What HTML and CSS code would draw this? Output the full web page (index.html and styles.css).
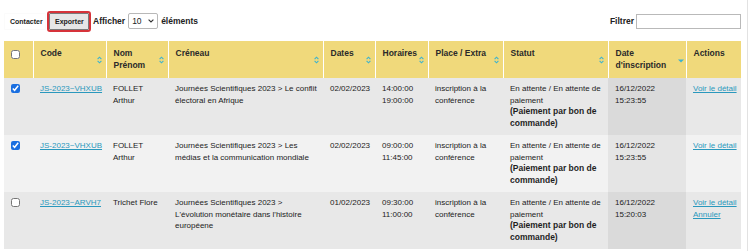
FILE: index.html
```html
<!DOCTYPE html>
<html lang="fr">
<head>
<meta charset="utf-8">
<title>Inscriptions</title>
<link rel="stylesheet" href="styles.css">
</head>
<body>
<div class="page">
  <div class="toolbar">
    <div class="toolbar-left">
      <button class="btn btn-plain" type="button">Contacter</button>
      <button class="btn btn-export" type="button">Exporter</button>
      <label class="length">Afficher
        <span class="select-wrap">
          <select class="length-select"><option>10</option><option>25</option><option>50</option></select>
          <svg class="chevron" width="6" height="4" viewBox="0 0 6 4"><path d="M0.6 0.6 L3 3 L5.4 0.6" fill="none" stroke="#333" stroke-width="1.1"/></svg>
        </span>
        éléments</label>
    </div>
    <label class="filter">Filtrer <input class="filter-input" type="search"></label>
  </div>

  <table class="grid">
    <colgroup>
      <col class="c-check"><col class="c-code"><col class="c-nom"><col class="c-creneau"><col class="c-dates">
      <col class="c-horaires"><col class="c-place"><col class="c-statut"><col class="c-dateins"><col class="c-actions">
    </colgroup>
    <thead>
      <tr>
        <th class="th-check"><input class="chk" type="checkbox"></th>
        <th>Code<svg class="sort" width="5" height="8" viewBox="0 0 5 8"><path d="M0.6 3.2 L2.5 1.2 L4.4 3.2 M0.6 4.8 L2.5 6.8 L4.4 4.8" fill="none" stroke="#3cb3cf" stroke-width="1.1"/></svg></th>
        <th>Nom Prénom<svg class="sort" width="5" height="8" viewBox="0 0 5 8"><path d="M0.6 3.2 L2.5 1.2 L4.4 3.2 M0.6 4.8 L2.5 6.8 L4.4 4.8" fill="none" stroke="#3cb3cf" stroke-width="1.1"/></svg></th>
        <th>Créneau<svg class="sort" width="5" height="8" viewBox="0 0 5 8"><path d="M0.6 3.2 L2.5 1.2 L4.4 3.2 M0.6 4.8 L2.5 6.8 L4.4 4.8" fill="none" stroke="#3cb3cf" stroke-width="1.1"/></svg></th>
        <th>Dates<svg class="sort" width="5" height="8" viewBox="0 0 5 8"><path d="M0.6 3.2 L2.5 1.2 L4.4 3.2 M0.6 4.8 L2.5 6.8 L4.4 4.8" fill="none" stroke="#3cb3cf" stroke-width="1.1"/></svg></th>
        <th>Horaires<svg class="sort" width="5" height="8" viewBox="0 0 5 8"><path d="M0.6 3.2 L2.5 1.2 L4.4 3.2 M0.6 4.8 L2.5 6.8 L4.4 4.8" fill="none" stroke="#3cb3cf" stroke-width="1.1"/></svg></th>
        <th>Place / Extra<svg class="sort" width="5" height="8" viewBox="0 0 5 8"><path d="M0.6 3.2 L2.5 1.2 L4.4 3.2 M0.6 4.8 L2.5 6.8 L4.4 4.8" fill="none" stroke="#3cb3cf" stroke-width="1.1"/></svg></th>
        <th>Statut<svg class="sort" width="5" height="8" viewBox="0 0 5 8"><path d="M0.6 3.2 L2.5 1.2 L4.4 3.2 M0.6 4.8 L2.5 6.8 L4.4 4.8" fill="none" stroke="#3cb3cf" stroke-width="1.1"/></svg></th>
        <th class="sorted">Date d'inscription<svg class="sort-desc" width="6" height="4" viewBox="0 0 6 4"><path d="M0 0.5 H6 L3 3.5 Z" fill="#3cb3cf"/></svg></th>
        <th class="th-actions">Actions</th>
      </tr>
    </thead>
    <tbody>
      <tr class="odd">
        <td><input class="chk" type="checkbox" checked></td>
        <td><a href="#" class="link">JS-2023~VHXUB</a></td>
        <td>FOLLET Arthur</td>
        <td>Journées Scientifiques 2023 &gt; Le conflit électoral en Afrique</td>
        <td>02/02/2023</td>
        <td>14:00:00<br>19:00:00</td>
        <td>inscription à la conférence</td>
        <td class="statut">En attente / En attente de paiement<br><b class="strong">(Paiement par bon de commande)</b></td>
        <td class="sorted">16/12/2022<br>15:23:55</td>
        <td><a href="#" class="link">Voir le détail</a></td>
      </tr>
      <tr class="even">
        <td><input class="chk" type="checkbox" checked></td>
        <td><a href="#" class="link">JS-2023~VHXUB</a></td>
        <td>FOLLET Arthur</td>
        <td>Journées Scientifiques 2023 &gt; Les médias et la communication mondiale</td>
        <td>02/02/2023</td>
        <td>09:00:00<br>11:45:00</td>
        <td>inscription à la conférence</td>
        <td class="statut">En attente / En attente de paiement<br><b class="strong">(Paiement par bon de commande)</b></td>
        <td class="sorted">16/12/2022<br>15:23:55</td>
        <td><a href="#" class="link">Voir le détail</a></td>
      </tr>
      <tr class="odd">
        <td><input class="chk" type="checkbox"></td>
        <td><a href="#" class="link">JS-2023~ARVH7</a></td>
        <td>Trichet Flore</td>
        <td>Journées Scientifiques 2023 &gt; L'évolution monétaire dans l'histoire européene</td>
        <td>01/02/2023</td>
        <td>09:30:00<br>11:00:00</td>
        <td>inscription à la conférence</td>
        <td class="statut">En attente / En attente de paiement<br><b class="strong">(Paiement par bon de commande)</b></td>
        <td class="sorted">16/12/2022<br>15:20:03</td>
        <td><a href="#" class="link">Voir le détail</a><br><a href="#" class="link">Annuler</a></td>
      </tr>
    </tbody>
  </table>
</div>
</body>
</html>
```

FILE: styles.css
```css
* { box-sizing: border-box; }

html, body {
  margin: 0;
  padding: 0;
  background: #ffffff;
}

body {
  font-family: "Liberation Sans", Arial, sans-serif;
  color: #222222;
}

.page {
  width: 748px;
  min-height: 251px;
  padding: 0 6px 0 4px;
  border-right: 1px solid #e2e2e2;
}

/* Toolbar */
.toolbar {
  height: 41px;
  display: flex;
  align-items: center;
  justify-content: space-between;
  padding-top: 1px;
}

.toolbar-left {
  display: flex;
  align-items: center;
}

.btn {
  font-family: "Liberation Sans", Arial, sans-serif;
  font-size: 7px;
  font-weight: bold;
  color: #222;
  height: 17px;
  line-height: 13px;
  border-radius: 1px;
  cursor: pointer;
}

.btn-plain {
  background: #ffffff;
  border: 1px solid #fbfbfb;
  padding: 0 5px;
  width: 42px;
}

.btn-export {
  margin-left: 3px;
  background: #e6e6e6;
  border: 1px solid #7a7a7a;
  outline: 2px solid #d6333a;
  outline-offset: 0;
  padding: 0 5px;
  width: 40px;
}

.length {
  display: flex;
  align-items: center;
  gap: 3px;
  margin-left: 4px;
  font-size: 8.5px;
  font-weight: bold;
  color: #222;
}

.select-wrap {
  position: relative;
  display: inline-flex;
}

.length-select {
  -webkit-appearance: none;
  appearance: none;
  width: 30px;
  height: 16px;
  font-family: "Liberation Sans", Arial, sans-serif;
  font-size: 8.5px;
  padding: 0 0 0 3px;
  border: 1px solid #b8b8b8;
  border-radius: 2px;
  background: #fff;
  color: #222;
}

.chevron {
  position: absolute;
  right: 4px;
  top: 6px;
  pointer-events: none;
}

.filter {
  display: flex;
  align-items: center;
  gap: 2px;
  font-size: 8.5px;
  font-weight: bold;
  color: #222;
}

.filter-input {
  width: 105px;
  height: 15px;
  border: 1px solid #b9b9b9;
  padding: 0 2px;
  font-size: 8px;
}

/* Table */
.grid {
  width: 737px;
  border-collapse: collapse;
  table-layout: fixed;
}

.c-check { width: 29px; }
.c-code { width: 73px; }
.c-nom { width: 62px; }
.c-creneau { width: 155px; }
.c-dates { width: 52px; }
.c-horaires { width: 53px; }
.c-place { width: 75px; }
.c-statut { width: 105px; }
.c-dateins { width: 78px; }
.c-actions { width: 55px; }

.grid th {
  position: relative;
  background: #f0d97b;
  color: #2a2a2a;
  font-size: 8.5px;
  font-weight: bold;
  line-height: 11.5px;
  text-align: left;
  vertical-align: top;
  padding: 7px 13px 7px 7px;
  height: 37px;
  border-left: 1px solid #ffffff;
}

.grid th:first-child { border-left: none; }

.grid th.th-check { padding: 8px 0 0 7px; }
.grid th.th-actions { padding-right: 4px; }

.sort {
  position: absolute;
  right: 4px;
  top: 50%;
  margin-top: -4px;
}

.sort-desc {
  position: absolute;
  right: 2px;
  top: 50%;
  margin-top: -1px;
}

.grid td {
  font-size: 8px;
  line-height: 11.5px;
  vertical-align: top;
  padding: 5px 3px 6px 7px;
  height: 57px;
  color: #222;
}

.grid td.statut {
  padding-right: 1px;
}

.grid tr.odd td { background: #e8e8e8; }
.grid tr.odd td.sorted { background: #dadada; }
.grid tr.even td { background: #f2f2f2; }
.grid tr.even td.sorted { background: #e5e5e5; }

.strong {
  font-size: 8.5px;
  font-weight: bold;
  color: #1f1f1f;
}

.link {
  color: #2a98bd;
  text-decoration: underline;
  white-space: nowrap;
}

.chk {
  width: 9px;
  height: 9px;
  margin: 1px 0 0 0;
  accent-color: #1a6fe0;
}
```
